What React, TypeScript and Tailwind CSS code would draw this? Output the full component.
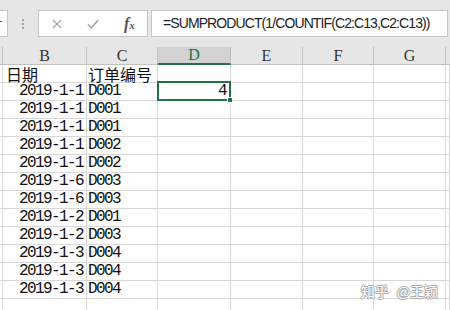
import React from "react";

const rows: [string, string][] = [
  ["2019-1-1", "D001"],
  ["2019-1-1", "D001"],
  ["2019-1-1", "D001"],
  ["2019-1-1", "D002"],
  ["2019-1-1", "D002"],
  ["2019-1-6", "D003"],
  ["2019-1-6", "D003"],
  ["2019-1-2", "D001"],
  ["2019-1-2", "D003"],
  ["2019-1-3", "D004"],
  ["2019-1-3", "D004"],
  ["2019-1-3", "D004"],
];

const gridCols = "grid grid-cols-[3px_84px_71px_73px_72px_71px_72px_1fr]";
const cell = "h-[18px] border-r border-b border-[#d8d8d8]";
const mono = "font-['Liberation_Mono',monospace] text-[16px] tracking-[-1.6px] leading-[17px] text-[#111]";

function Header({ label, active }: { label: string; active?: boolean }) {
  if (active) {
    return (
      <div className="flex h-[18px] items-center justify-center border-r border-b-2 border-r-[#bdbdbd] border-b-[#217346] bg-[#d2d2d2] font-['Liberation_Serif',serif] text-[16px] leading-none text-[#217346]">
        {label}
      </div>
    );
  }
  return (
    <div className="flex h-[18px] items-center justify-center border-r border-b border-[#c2c2c2] bg-[#e6e6e6] font-['Liberation_Serif',serif] text-[16px] leading-none text-[#333]">
      {label}
    </div>
  );
}

function EmptyCells({ n }: { n: number }) {
  return (
    <>
      {Array.from({ length: n }).map((_, i) => (
        <div key={i} className={cell} />
      ))}
    </>
  );
}

export default function App() {
  return (
    <div className="relative h-[310px] w-[450px] overflow-hidden bg-white">
      {/* formula toolbar */}
      <div className="flex h-[47px] items-start bg-[#e6e6e6] pt-[10px]">
        <div className="relative h-[27px] w-[8px] border border-l-0 border-[#c6c6c6] bg-white">
          <div className="absolute left-0 top-[10px] h-[1px] w-[2px] bg-[#555]" />
        </div>
        <div className="flex h-[27px] w-[30px] flex-col items-center justify-center gap-[2px]">
          <div className="h-[2px] w-[2px] bg-[#a3a3a3]" />
          <div className="h-[2px] w-[2px] bg-[#a3a3a3]" />
          <div className="h-[2px] w-[2px] bg-[#a3a3a3]" />
        </div>
        <div className="flex h-[27px] w-[110px] items-center gap-[25px] border border-[#c6c6c6] bg-white pl-[13px]">
          <svg width="10" height="10" viewBox="0 0 10 10">
            <path d="M1 1 L9 9 M9 1 L1 9" stroke="#a6a6a6" strokeWidth="1.3" fill="none" />
          </svg>
          <svg width="12" height="10" viewBox="0 0 12 10">
            <path d="M1 5.2 L4.5 8.8 L11 1.2" stroke="#a6a6a6" strokeWidth="1.6" fill="none" />
          </svg>
          <span className="font-['Liberation_Serif',serif] italic leading-none text-[#555]">
            <span className="text-[16px] font-bold">f</span>
            <span className="text-[11px] font-bold">x</span>
          </span>
        </div>
        <div className="ml-[3px] flex h-[27px] w-[297px] items-center border border-[#c6c6c6] bg-white pl-[11px] font-['Liberation_Sans',sans-serif] text-[14px] tracking-[-0.9px] text-[#222]">
          =SUMPRODUCT(1/COUNTIF(C2:C13,C2:C13))
        </div>
      </div>

      {/* column headers */}
      <div className={gridCols}>
        <div className="h-[18px] border-r border-b border-[#c2c2c2] bg-[#e6e6e6]" />
        <Header label="B" />
        <Header label="C" />
        <Header label="D" active />
        <Header label="E" />
        <Header label="F" />
        <Header label="G" />
        <div className="h-[18px] border-b border-[#c2c2c2] bg-[#e6e6e6]" />
      </div>

      {/* sheet body */}
      <div className={gridCols}>
        {/* row 1 */}
        <div className={cell} />
        <div className={`${cell} flex items-center pl-[3px] font-['Noto_Sans_CJK_SC',sans-serif] text-[16px] leading-[16px] text-[#111]`}>
          日期
        </div>
        <div className={`${cell} flex items-center pl-[1px] font-['Noto_Sans_CJK_SC',sans-serif] text-[16px] leading-[16px] text-[#111]`}>
          订单编号
        </div>
        <EmptyCells n={5} />

        {rows.map(([date, id], i) => (
          <React.Fragment key={i}>
            <div className={cell} />
            <div className={`${cell} ${mono} flex items-end justify-end pr-[3px]`}>{date}</div>
            <div className={`${cell} ${mono} flex items-end pl-[1px]`}>{id}</div>
            {i === 0 ? (
              <div className={`${cell} relative flex items-end justify-end pr-[4px] ${mono}`}>
                4
                <div className="absolute -left-[1px] -top-[2px] -right-[1px] -bottom-[1px] border-2 border-[#217346]" />
                <div className="absolute -bottom-[3px] -right-[3px] h-[6px] w-[6px] border border-white bg-[#217346]" />
              </div>
            ) : (
              <div className={cell} />
            )}
            <EmptyCells n={4} />
          </React.Fragment>
        ))}

        {/* partial row */}
        <EmptyCells n={8} />
      </div>

      {/* watermark */}
      <div className="absolute bottom-[12px] right-[12px] flex items-center gap-[8px] font-['Noto_Sans_CJK_SC',sans-serif] text-[14px] leading-none text-white [text-shadow:1px_0_0_#a8a8a8,-1px_0_0_#a8a8a8,0_1px_0_#a8a8a8,0_-1px_0_#a8a8a8]">
        <span>知乎</span>
        <span>@王颖</span>
      </div>
    </div>
  );
}
